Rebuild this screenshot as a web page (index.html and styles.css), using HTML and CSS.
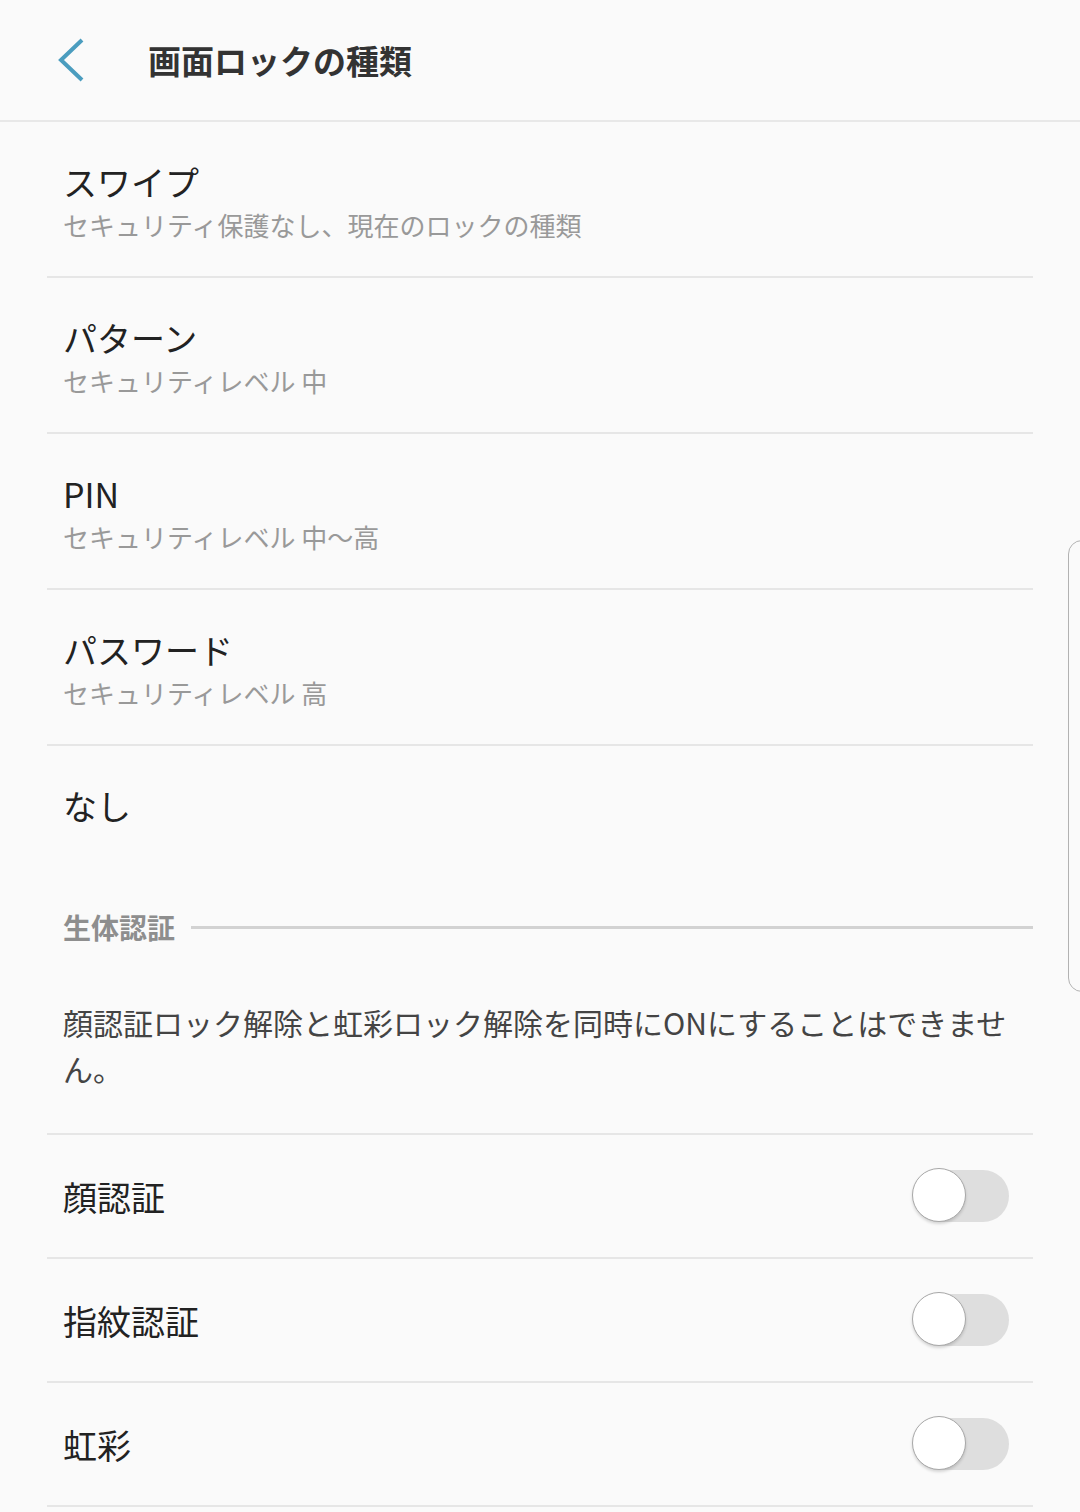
FILE: index.html
```html
<!DOCTYPE html>
<html lang="ja">
<head>
<meta charset="UTF-8">
<title>画面ロックの種類</title>
<link rel="stylesheet" href="styles.css">
</head>
<body>
<header class="appBar">
  <svg class="backIcon" width="30" height="44" viewBox="0 0 30 44">
    <polyline points="25,2 4,22 25,42" fill="none" stroke="#4b9dbf" stroke-width="4"/>
  </svg>
  <h1 class="appTitle">画面ロックの種類</h1>
</header>

<main class="list">
  <div class="item">
    <div class="itemTitle">スワイプ</div>
    <div class="itemSub">セキュリティ保護なし、現在のロックの種類</div>
  </div>
  <div class="item">
    <div class="itemTitle">パターン</div>
    <div class="itemSub">セキュリティレベル 中</div>
  </div>
  <div class="item">
    <div class="itemTitle">PIN</div>
    <div class="itemSub">セキュリティレベル 中～高</div>
  </div>
  <div class="item">
    <div class="itemTitle">パスワード</div>
    <div class="itemSub">セキュリティレベル 高</div>
  </div>
  <div class="item item-last">
    <div class="itemTitle">なし</div>
  </div>

  <div class="sectionHead">
    <span class="sectionLabel">生体認証</span>
    <span class="sectionLine"></span>
  </div>

  <p class="note">顔認証ロック解除と虹彩ロック解除を同時にONにすることはできません。</p>

  <div class="toggleRow">
    <span class="toggleLabel">顔認証</span>
    <span class="switch"><span class="knob"></span></span>
  </div>
  <div class="toggleRow">
    <span class="toggleLabel">指紋認証</span>
    <span class="switch"><span class="knob"></span></span>
  </div>
  <div class="toggleRow">
    <span class="toggleLabel">虹彩</span>
    <span class="switch"><span class="knob"></span></span>
  </div>
</main>

<div class="scrollHandle"></div>
</body>
</html>
```

FILE: styles.css
```css
body { margin: 0; background: #fafafa; font-family: "Noto Sans CJK JP", "Noto Sans", sans-serif; color: #222; overflow: hidden; }

.appBar { height: 120px; display: flex; align-items: center; border-bottom: 2px solid #e8e8e8; }
.backIcon { margin-left: 57px; margin-right: 61px; }
.appTitle { margin: 0; font-size: 33px; font-weight: bold; color: #333; line-height: 44px; }

.list { display: flex; flex-direction: column; }
.item { margin: 0 47px; padding: 38px 16px 33px; border-bottom: 2px solid #e6e6e6; }
.item-last { border-bottom: none; padding-bottom: 35px; }
.itemTitle { font-size: 34px; line-height: 44px; margin-bottom: 3px; color: #222; }
.itemSub { font-size: 26px; line-height: 36px; color: #999; }

.sectionHead { display: flex; align-items: center; margin: 0 47px; padding: 41px 0 0 16px; height: 40px; }
.sectionLabel { font-size: 28px; font-weight: bold; color: #8e8e8e; line-height: 40px; }
.sectionLine { flex: 1; height: 3px; background: #d2d2d2; margin-left: 16px; }

.note { margin: 0 47px; padding: 52px 16px 42px 16px; font-size: 30px; line-height: 46px; color: #444; border-bottom: 2px solid #e6e6e6; }

.toggleRow { display: flex; align-items: center; justify-content: space-between; height: 122px; margin: 0 47px; padding: 0 24px 0 16px; border-bottom: 2px solid #e6e6e6; }
.toggleLabel { font-size: 34px; color: #222; }
.switch { position: relative; width: 96px; height: 52px; background: #dedede; border-radius: 26px; }
.knob { position: absolute; left: -1px; top: -2px; width: 54px; height: 54px; border-radius: 50%; background: #fff; border: 1.5px solid #a8a8a8; box-shadow: 0 2px 3px rgba(0,0,0,0.15); box-sizing: border-box; }

.scrollHandle { position: fixed; left: 1068px; top: 540px; width: 30px; height: 452px; border: 1.5px solid #b2b2b2; border-radius: 14px; box-sizing: border-box; }
```
